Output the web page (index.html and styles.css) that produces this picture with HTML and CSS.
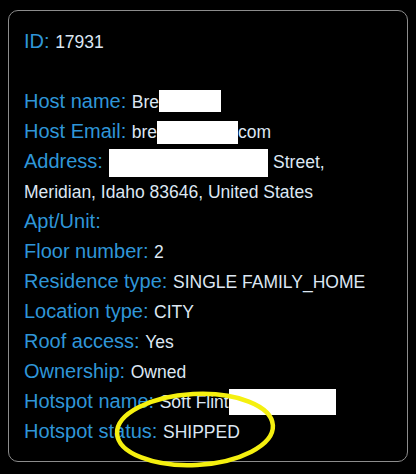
FILE: index.html
```html
<!DOCTYPE html>
<html lang="en">
<head>
    <meta charset="UTF-8">
    <meta name="viewport" content="width=device-width, initial-scale=1.0">
    <title>Hotspot Details</title>
    <link rel="stylesheet" href="styles.css">
</head>
<body>
    <div class="card">
        <div class="row gap-after"><span class="label">ID:</span> <span class="value">17931</span></div>
        <div class="row"><span class="label">Host name:</span> <span class="value">Bre<span class="redact redact-name"></span></span></div>
        <div class="row"><span class="label">Host Email:</span> <span class="value">bre<span class="redact redact-email"></span>com</span></div>
        <div class="row"><span class="label">Address:</span> <span class="redact redact-address"></span> <span class="value">Street,<br>Meridian, Idaho 83646, United States</span></div>
        <div class="row"><span class="label">Apt/Unit:</span></div>
        <div class="row"><span class="label">Floor number:</span> <span class="value">2</span></div>
        <div class="row"><span class="label">Residence type:</span> <span class="value">SINGLE FAMILY_HOME</span></div>
        <div class="row"><span class="label">Location type:</span> <span class="value">CITY</span></div>
        <div class="row"><span class="label">Roof access:</span> <span class="value">Yes</span></div>
        <div class="row"><span class="label">Ownership:</span> <span class="value">Owned</span></div>
        <div class="row"><span class="label">Hotspot name:</span> <span class="value">Soft Flint<span class="redact redact-hotspot"></span></span></div>
        <div class="row"><span class="label">Hotspot status:</span> <span class="value">SHIPPED</span></div>

        <!-- hand-drawn highlight round the status -->
        <svg class="circle" width="400" height="452" viewBox="0 0 400 452">
            <ellipse cx="187" cy="419.5" rx="78" ry="35.5" transform="rotate(-3 187 419.5)" />
        </svg>
    </div>
</body>
</html>
```

FILE: styles.css
```css
body {
    margin: 0;
    padding: 10px 8px 8px;
    background-color: #000;
    font-family: "Liberation Sans", Arial, sans-serif;
}
.card {
    position: relative;
    border: 1px solid #8c8c8c;
    border-radius: 10px;
    padding: 15px 14px 15px 15px;
    background-color: #000;
}
.row {
    line-height: 30px;
    font-size: 20px;
}
.gap-after {
    margin-bottom: 30px;
}
.label {
    color: #2f96d8;
}
.value {
    color: #dde7f3;
    font-size: 17.5px;
    line-height: 20px;
}
.redact {
    display: inline-block;
    background-color: #fff;
}
.redact-name {
    width: 62px;
    height: 22px;
    margin-bottom: -4px;
}
.redact-email {
    width: 81px;
    height: 23px;
    margin-bottom: -6px;
}
.redact-address {
    width: 159px;
    height: 28px;
    margin-bottom: -9px;
}
.redact-hotspot {
    width: 107px;
    height: 26px;
    margin-bottom: -7px;
}
.circle {
    position: absolute;
    left: -1px;
    top: -1px;
    overflow: visible;
    pointer-events: none;
}
.circle ellipse {
    fill: none;
    stroke: #f5f00f;
    stroke-width: 4.5;
}
```
